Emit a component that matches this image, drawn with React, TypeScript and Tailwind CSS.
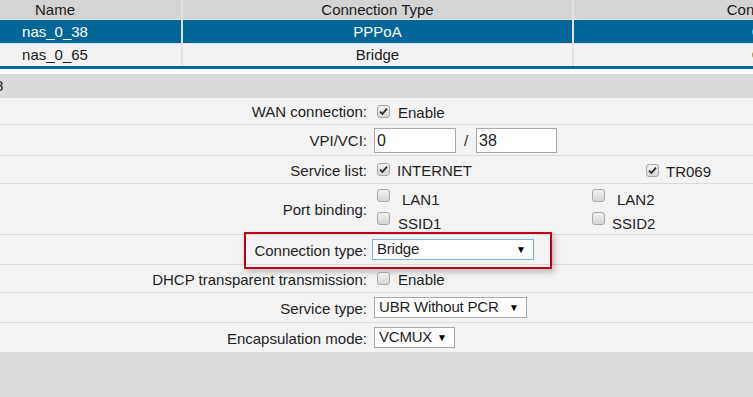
import React from 'react';

const font = { fontFamily: '"Liberation Sans", Arial, sans-serif' };

const CheckBox: React.FC<{ checked?: boolean }> = ({ checked }) => (
  <span className="inline-flex w-[13px] h-[13px] shrink-0 items-center justify-center rounded-[3px] border border-[#a8a8a8] bg-gradient-to-b from-[#f2f2f2] to-[#d6d6d6]">
    {checked && (
      <svg width="9" height="9" viewBox="0 0 9 9">
        <path d="M1 4.6 L3.4 7 L8 1.6" fill="none" stroke="#2b2b2b" strokeWidth="1.8" />
      </svg>
    )}
  </span>
);

const Select: React.FC<{ value: string; width: string; focus?: boolean }> = ({ value, width, focus }) => (
  <div
    className={`flex items-center justify-between bg-white pl-[4px] pr-[7px] h-[21px] text-[15px] text-[#1e1e1e] border ${width} ${
      focus ? 'border-[#7eb4ea]' : 'border-[#a9a9a9]'
    }`}
  >
    <span className="tracking-[-0.2px]">{value}</span>
    <span className="text-[10px] text-black">▼</span>
  </div>
);

const FormRow: React.FC<{ label: string; h: string; children?: React.ReactNode; extra?: React.ReactNode }> = ({
  label,
  h,
  children,
  extra,
}) => (
  <div className={`relative flex items-center border-b border-[#dadada] ${h}`}>
    {extra}
    <div className="w-[368px] shrink-0 text-right pr-[1px] pt-[3px] text-[15px] text-[#1e1e1e]">{label}</div>
    <div className="flex-1 pl-[6px] text-[15px] text-[#1e1e1e]">{children}</div>
  </div>
);

export default function App() {
  return (
    <div className="w-[753px] h-[397px] overflow-hidden bg-white" style={font}>
      {/* Table */}
      <div className="ml-[-71px] w-[1100px] border-b-[3px] border-[#006699]">
        <div className="flex h-[19px] bg-[#d4d4d4] text-[15px] text-[#1a1a1a] leading-[19px]">
          <div className="w-[252px] shrink-0 text-center">Name</div>
          <div className="w-[391px] shrink-0 border-l-2 border-[#e2e2e2] text-center">Connection Type</div>
          <div className="w-[430px] shrink-0 border-l-2 border-[#e2e2e2] text-center">Connection Status</div>
        </div>
        <div className="flex h-[24px] bg-[#006699] text-[15px] text-white leading-[23px] border-t border-[#e2e2e2]">
          <div className="w-[252px] shrink-0 text-center">nas_0_38</div>
          <div className="w-[391px] shrink-0 border-l-2 border-[#e2e2e2] text-center">PPPoA</div>
          <div className="w-[430px] shrink-0 border-l-2 border-[#e2e2e2] text-center">Connected</div>
        </div>
        <div className="flex h-[23px] bg-[#f2f2f2] text-[15px] text-[#1a1a1a] leading-[22px] border-t border-[#e2e2e2]">
          <div className="w-[252px] shrink-0 text-center">nas_0_65</div>
          <div className="w-[391px] shrink-0 border-l-2 border-[#e2e2e2] text-center">Bridge</div>
          <div className="w-[430px] shrink-0 border-l-2 border-[#e2e2e2] text-center">Connected</div>
        </div>
      </div>

      <div className="h-[5px]" />

      {/* Section title */}
      <div className="h-[24px] bg-[#dadada] text-[15px] text-[#1a1a1a] leading-[24px] ml-[-5px]">8</div>

      {/* Form */}
      <div className="bg-[#f3f3f3]">
        <FormRow label="WAN connection:" h="h-[27px]">
          <div className="flex items-center gap-[8px] pl-[3px]">
            <CheckBox checked />
            <span className="mt-[4px]">Enable</span>
          </div>
        </FormRow>
        <FormRow label="VPI/VCI:" h="h-[31px]">
          <div className="flex items-center">
            <div className="w-[82px] h-[25px] border border-[#a9a9a9] bg-white pl-[2px] leading-[23px] text-[16px]">0</div>
            <span className="w-[20px] text-center mt-[2px]">/</span>
            <div className="w-[81px] h-[25px] border border-[#a9a9a9] bg-white pl-[2px] leading-[23px] text-[16px]">38</div>
          </div>
        </FormRow>
        <FormRow label="Service list:" h="h-[28px]">
          <div className="flex items-center pl-[3px]">
            <div className="flex items-center gap-[7px] w-[269px]">
              <CheckBox checked />
              <span className="mt-[4px]">INTERNET</span>
            </div>
            <div className="flex items-center gap-[7px] mt-[2px]">
              <CheckBox checked />
              <span className="mt-[4px]">TR069</span>
            </div>
          </div>
        </FormRow>
        <FormRow label="Port binding:" h="h-[51px]">
          <div className="grid grid-cols-[215px_1fr] gap-y-[6px] pl-[3px]">
            <div className="flex items-start gap-[12px] h-[17px]">
              <CheckBox />
              <span className="leading-[17px] mt-[2px]">LAN1</span>
            </div>
            <div className="flex items-start gap-[12px] h-[17px]">
              <CheckBox />
              <span className="leading-[17px] mt-[2px]">LAN2</span>
            </div>
            <div className="flex items-start gap-[8px] h-[17px]">
              <CheckBox />
              <span className="leading-[17px] mt-[3px]">SSID1</span>
            </div>
            <div className="flex items-start gap-[7px] h-[17px]">
              <CheckBox />
              <span className="leading-[17px] mt-[3px]">SSID2</span>
            </div>
          </div>
        </FormRow>
        <FormRow
          label="Connection type:"
          h="h-[30px]"
          extra={
            <div className="absolute left-[244px] top-[-3px] w-[308px] h-[37px] border-2 border-[#c00018] shadow-[2px_3px_6px_rgba(0,0,0,0.25)] pointer-events-none" />
          }
        >
          <div className="ml-[-2px]">
            <Select value="Bridge" width="w-[162px]" focus />
          </div>
        </FormRow>
        <FormRow label="DHCP transparent transmission:" h="h-[28px]">
          <div className="flex items-center gap-[8px] pl-[3px]">
            <CheckBox />
            <span className="mt-[4px]">Enable</span>
          </div>
        </FormRow>
        <FormRow label="Service type:" h="h-[30px]">
          <Select value="UBR Without PCR" width="w-[153px]" />
        </FormRow>
        <FormRow label="Encapsulation mode:" h="h-[30px]">
          <Select value="VCMUX" width="w-[81px]" />
        </FormRow>
      </div>
      <div className="h-[50px] bg-[#dcdcdc]" />
    </div>
  );
}
